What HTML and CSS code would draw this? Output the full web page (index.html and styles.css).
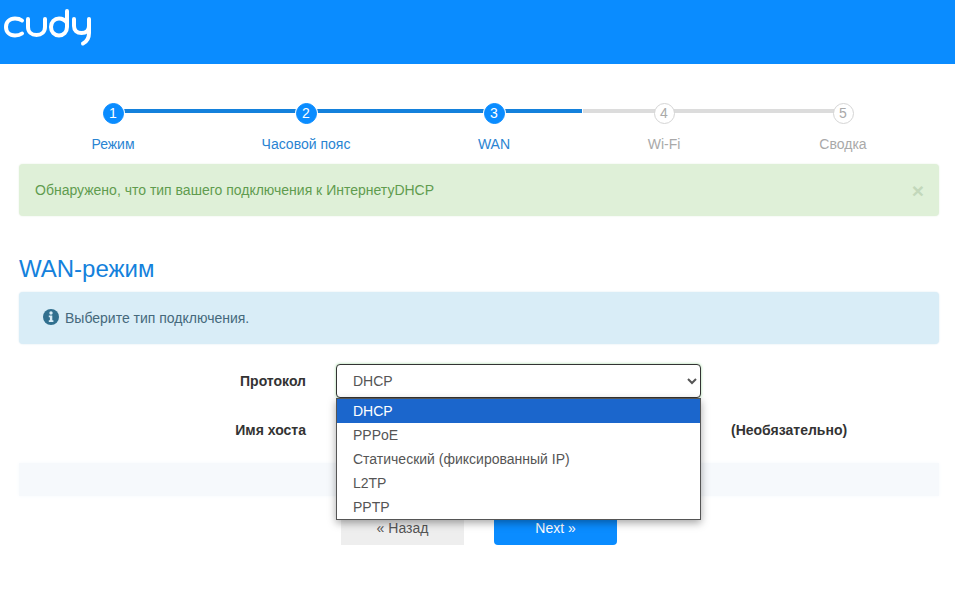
FILE: index.html
```html
<!DOCTYPE html>
<html lang="ru">
<head>
<meta charset="utf-8">
<title>Cudy</title>
<link rel="stylesheet" href="styles.css">
</head>
<body>
<header class="top">
  <svg class="logo" width="96" height="50" viewBox="0 0 96 50" fill="none" stroke="#fff" stroke-width="4" stroke-linecap="round" stroke-linejoin="round">
    <path d="M22 20.500C20 19 18 18.500 15 18.500C9.500 18.500 6 22 6 27C6 32 9.500 35.500 15 35.500C18 35.500 20 35 22 33.500"/>
    <path d="M28 19V27C28 32 31.500 35 36.500 35C41.500 35 45 32 45 27V19"/>
    <path d="M67 11V27C67 32 63.500 35.500 59 35.500C54.500 35.500 51 32 51 27C51 22 54.500 18.500 59 18.500C62 18.500 65 20 67 23"/>
    <path d="M74 19V26C74 30.500 77 33 81.500 33C86 33 89 30.500 89 26V19M89 26V33C89 38 87 41.500 83 43.500"/>
  </svg>
</header>
<main class="page">
  <ol class="steps">
    <li class="step done"><span class="dot">1</span><span class="name">Режим</span></li>
    <li class="step done"><span class="dot">2</span><span class="name">Часовой пояс</span></li>
    <li class="step current"><span class="dot">3</span><span class="name">WAN</span></li>
    <li class="step"><span class="dot">4</span><span class="name">Wi-Fi</span></li>
    <li class="step last"><span class="dot">5</span><span class="name">Сводка</span></li>
  </ol>

  <div class="alert success">
    <span>Обнаружено, что тип вашего подключения к ИнтернетуDHCP</span>
    <span class="close">×</span>
  </div>

  <h2 class="title">WAN-режим</h2>

  <div class="alert info">
    <svg class="info-icon" width="16" height="16" viewBox="0 0 16 16"><circle cx="8" cy="8" r="8" fill="#31708f"/><circle cx="8" cy="4" r="1.700" fill="#d9edf7"/><path d="M5.800 6.600H9.300V11.300H10.400V13H5.800V11.300H6.900V8.300H5.800Z" fill="#d9edf7"/></svg>
    <span>Выберите тип подключения.</span>
  </div>

  <form class="form">
    <div class="row">
      <label class="label">Протокол</label>
      <div class="control">
        <select class="select"><option>DHCP</option></select>
        <ul class="options">
          <li class="sel">DHCP</li>
          <li>PPPoE</li>
          <li>Статический (фиксированный IP)</li>
          <li>L2TP</li>
          <li>PPTP</li>
        </ul>
      </div>
    </div>
    <div class="row second">
      <label class="label">Имя хоста</label>
      <div class="control"></div>
      <span class="hint">(Необязательно)</span>
    </div>
  </form>

  <div class="band"></div>

  <div class="actions">
    <button class="btn back" type="button">« Назад</button>
    <button class="btn next" type="button">Next »</button>
  </div>
</main>
</body>
</html>
```
FILE: styles.css
```css
* { box-sizing: border-box; }
html, body { margin: 0; padding: 0; }
body {
  width: 955px;
  height: 593px;
  overflow: hidden;
  background: #fff;
  font-family: "Liberation Sans", Arial, sans-serif;
  font-size: 14px;
  color: #555;
}
.top { height: 64px; background: #0a8cff; }
.logo { display: block; }
.page { padding: 0 14px 0 19px; }

.steps {
  list-style: none;
  margin: 39px 0 0;
  padding: 0;
  display: grid;
  grid-template-columns: 188px 198px 178px 162px 196px;
}
.step {
  position: relative;
  display: flex;
  flex-direction: column;
  align-items: center;
  color: #a9a9a9;
}
.step::before {
  content: "";
  position: absolute;
  top: 6px;
  left: 0;
  right: 0;
  height: 4px;
  background: #dcdcdc;
}
.step:first-child::before { left: 50%; }
.step.last::before { right: 50%; }
.step.done::before, .step.current::before { background: #1481dc; }
.step.current::before { right: 1px; }
.dot {
  position: relative;
  width: 21px;
  height: 21px;
  border-radius: 50%;
  background: #fff;
  border: 1px solid #d5d5d5;
  text-align: center;
  font-size: 14px;
  line-height: 19px;
}
.done .dot, .current .dot {
  background: #0a8cff;
  border-color: #0a8cff;
  color: #fff;
  box-shadow: 0 0 0 1px #fff;
}
.name { margin-top: 11px; line-height: 18px; font-size: 14px; }
.done .name, .current .name { color: #2a84d2; }

.alert {
  display: flex;
  align-items: center;
  height: 52px;
  width: 920px;
  border-radius: 4px;
  padding: 0 16px;
}
.success {
  margin-top: 11px;
  background: #dff0d8;
  color: #5f9c4f;
  justify-content: space-between;
  box-shadow: 0 0 2px #e4eedf;
}
.close { color: #c3d8bb; font-size: 21px; font-weight: 700; line-height: 1; margin-right: -1px; }
.title {
  margin: 39px 0 9px;
  font-size: 24px;
  line-height: 28px;
  font-weight: 400;
  color: #1481dc;
}
.info {
  background: #d9edf7;
  color: #45697c;
  padding-left: 24px;
  gap: 6px;
  box-shadow: 0 0 2px #d8e8f0;
}
.info-icon { flex: none; margin-top: -2px; }

.form { margin-top: 20px; }
.row { display: flex; align-items: center; height: 34px; }
.row.second { margin-top: 15px; }
.label {
  width: 287px;
  text-align: right;
  font-weight: 700;
  color: #333;
}
.control { position: relative; width: 365px; margin-left: 30px; height: 34px; }
.select {
  display: block;
  width: 365px;
  height: 34px;
  padding: 0 12px;
  border: 1px solid #333;
  border-radius: 4px;
  background: #fff;
  color: #555;
  font: 14px "Liberation Sans", Arial, sans-serif;
  box-shadow: 0 0 3px #9fd69f;
  outline: none;
}
.options {
  position: absolute;
  z-index: 2;
  top: 34px;
  left: 0;
  width: 365px;
  margin: 0;
  padding: 0;
  list-style: none;
  background: #fff;
  border: 1px solid #555;
  box-shadow: 0 3px 8px rgba(0, 0, 0, .35);
}
.options li { height: 24px; line-height: 24px; padding-left: 16px; color: #555; }
.options li.sel { background: #1b66cc; color: #fff; }
.hint { margin-left: 30px; font-weight: 700; color: #333; }

.band {
  width: 920px;
  height: 33px;
  margin-top: 16px;
  background: #f6f9fc;
  box-shadow: 0 0 4px #f6f9fc;
}
.actions {
  display: flex;
  justify-content: center;
  gap: 30px;
  margin-top: 14px;
  padding-right: 2px;
}
.btn {
  width: 123px;
  height: 35px;
  border: 0;
  border-radius: 4px;
  font: 14px "Liberation Sans", Arial, sans-serif;
}
.back { background: #eee; color: #555; border-radius: 0; }
.next { background: #0a8cff; color: #fff; }
```
